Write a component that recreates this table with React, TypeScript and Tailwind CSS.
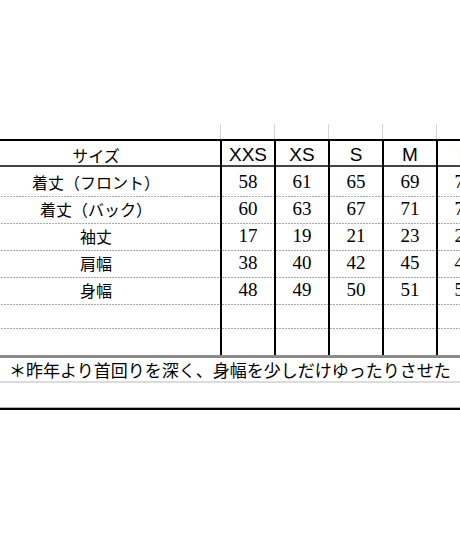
import React from "react";

const sizes = ["XXS", "XS", "S", "M", "L"];

const rows: { label: string; values: string[] }[] = [
  { label: "着丈（フロント）", values: ["58", "61", "65", "69", "73"] },
  { label: "着丈（バック）", values: ["60", "63", "67", "71", "75"] },
  { label: "袖丈", values: ["17", "19", "21", "23", "25"] },
  { label: "肩幅", values: ["38", "40", "42", "45", "47"] },
  { label: "身幅", values: ["48", "49", "50", "51", "53"] },
  { label: "", values: ["", "", "", "", ""] },
  { label: "", values: ["", "", "", "", ""] },
];

const jp = "font-['Noto_Sans_CJK_JP',sans-serif]";
const dotted =
  "bg-[linear-gradient(90deg,#555_50%,transparent_50%)] bg-[length:3px_1px] bg-bottom bg-repeat-x";

export default function App() {
  return (
    <div className="w-[460px] h-[552px] overflow-hidden bg-white text-black">
      <div className="h-[124px]" />

      {/* faint sheet gridlines above the table */}
      <div className="-ml-[28px] w-[518px] h-[15px] grid grid-cols-[248px_54px_54px_54px_54px_54px]">
        <div />
        {sizes.map((s) => (
          <div key={s} className="border-l border-[#d4d4d4]" />
        ))}
      </div>

      <div className="-ml-[28px] w-[518px] border-t-2 border-black">
        {/* header */}
        <div className="h-[26px] grid grid-cols-[248px_54px_54px_54px_54px_54px] border-b-2 border-[#444]">
          <div className={`flex items-center justify-center text-[16px] ${jp}`}>
            サイズ
          </div>
          {sizes.map((s) => (
            <div
              key={s}
              className="border-l-2 border-black flex items-center justify-center text-[19px] font-['Liberation_Sans',Arial,sans-serif]"
            >
              {s}
            </div>
          ))}
        </div>

        {rows.map((r, i) => {
          const last = i === rows.length - 1;
          return (
            <div
              key={i}
              className={`grid grid-cols-[248px_54px_54px_54px_54px_54px] ${
                last ? "h-[26px]" : "h-[27px]"
              }`}
            >
              <div
                className={`flex items-center justify-center text-[16px] ${jp} ${
                  last ? "" : dotted
                }`}
              >
                {r.label}
              </div>
              {r.values.map((v, j) => (
                <div
                  key={j}
                  className={`border-l-2 border-black flex items-center justify-center pt-[1px] text-[19px] font-['Liberation_Serif','Times_New_Roman',serif] ${
                    last ? "" : dotted
                  }`}
                >
                  {v}
                </div>
              ))}
            </div>
          );
        })}
      </div>

      <div className="h-[3px] bg-[#8a8a8a]" />

      <div
        className={`h-[25px] flex items-center pl-[9px] whitespace-nowrap text-[17px] border-b-2 border-[#dcdcdc] ${jp}`}
      >
        ＊昨年より首回りを深く、身幅を少しだけゆったりさせた
      </div>

      <div className="h-[24px]" />
      <div className="h-px bg-[#b0b0b0]" />
      <div className="h-[2px] bg-black" />
    </div>
  );
}
